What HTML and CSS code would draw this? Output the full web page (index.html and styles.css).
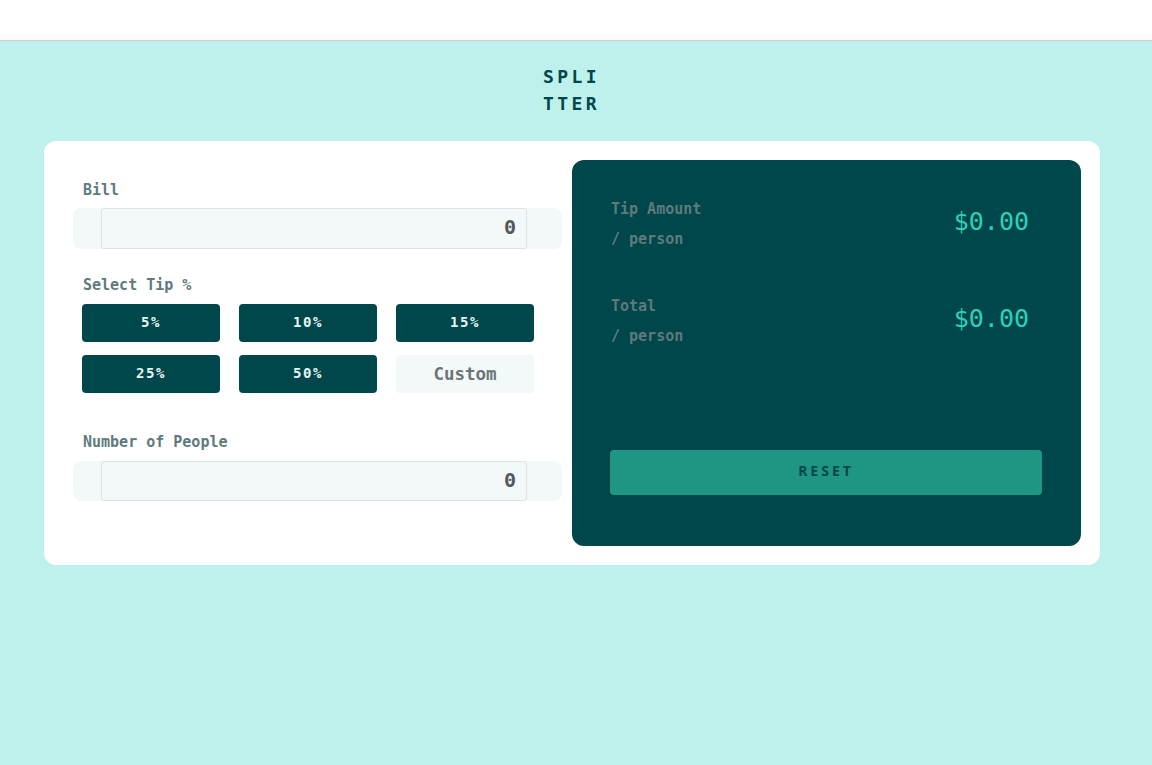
FILE: index.html
```html
<!DOCTYPE html>
<html lang="en">
<head>
<meta charset="utf-8">
<title>Splitter</title>
<link rel="stylesheet" href="styles.css">
</head>
<body>
<div class="topbar"></div>
<main class="page">
  <h1 class="logo">SPLITTER</h1>
  <section class="card">
    <div class="inputs">
      <label class="label label-bill">Bill</label>
      <div class="field">
        <div class="field-input">0</div>
      </div>
      <div class="label label-tip">Select Tip %</div>
      <div class="tips">
        <button class="tip">5%</button>
        <button class="tip">10%</button>
        <button class="tip">15%</button>
        <button class="tip">25%</button>
        <button class="tip">50%</button>
        <button class="tip tip-custom">Custom</button>
      </div>
      <label class="label label-people">Number of People</label>
      <div class="field field-people">
        <div class="field-input">0</div>
      </div>
    </div>
    <div class="results">
      <div class="result">
        <div class="result-text">
          <div>Tip Amount</div>
          <div>/ person</div>
        </div>
        <div class="result-value">$0.00</div>
      </div>
      <div class="result">
        <div class="result-text">
          <div>Total</div>
          <div>/ person</div>
        </div>
        <div class="result-value">$0.00</div>
      </div>
      <button class="reset">RESET</button>
    </div>
  </section>
</main>
</body>
</html>
```

FILE: styles.css
```css
* { box-sizing: border-box; }

html, body {
  margin: 0;
  padding: 0;
}

body {
  background: #bff1ec;
  font-family: "DejaVu Sans Mono", monospace;
  min-height: 765px;
}

.topbar {
  height: 41px;
  background: linear-gradient(#ffffff 0, #ffffff 34px, #fafafa 34px, #fafafa 40px);
  border-bottom: 1px solid #cfcfcf;
}

.page {
  padding-top: 22px;
}

.logo {
  margin: 0 auto;
  width: 62px;
  font-size: 18px;
  line-height: 27px;
  letter-spacing: 3.4px;
  font-weight: bold;
  color: #00474b;
  word-break: break-all;
  text-align: left;
  position: relative;
  left: -2px;
}

.card {
  margin: 24px 0 0 44px;
  width: 1056px;
  height: 424px;
  background: #ffffff;
  border-radius: 12px;
  padding: 19px 19px 19px 29px;
  display: flex;
  gap: 10px;
}

.inputs {
  width: 489px;
  display: flex;
  flex-direction: column;
}

.label {
  display: block;
  font-size: 15px;
  line-height: 18px;
  font-weight: bold;
  color: #5e7a7d;
  padding-left: 10px;
}

.label-bill { margin-top: 21px; margin-bottom: 9px; }
.label-tip { margin-top: 27px; margin-bottom: 10px; }
.label-people { margin-top: 40px; margin-bottom: 10px; }

.field {
  height: 41px;
  background: #f3f8f8;
  border-radius: 8px;
  padding: 0 35px 0 28px;
  display: flex;
}

.field-people {
  height: 40px;
}

.field-input {
  flex: 1;
  border: 1px solid #dce2e5;
  border-radius: 3px;
  background: #f3f9f9;
  text-align: right;
  font-size: 20px;
  font-weight: bold;
  line-height: 37px;
  color: #54585a;
  padding-right: 10px;
}

.tips {
  margin-left: 9px;
  width: 452px;
  display: grid;
  grid-template-columns: repeat(3, 138px);
  column-gap: 19px;
  row-gap: 13px;
}

.tip {
  height: 38px;
  border: none;
  border-radius: 4px;
  background: #00474b;
  color: #e8f6f5;
  font-family: "DejaVu Sans Mono", monospace;
  font-weight: bold;
  font-size: 14px;
  letter-spacing: 1.6px;
  padding: 0 0 2px;
}

.tip-custom {
  background: #f3f8f8;
  color: #6a7576;
  font-size: 17.5px;
  letter-spacing: 0;
  padding: 0;
}

.results {
  width: 509px;
  background: #00474b;
  border-radius: 12px;
  padding: 34px 39px 51px 38px;
  display: flex;
  flex-direction: column;
}

.result {
  display: flex;
  align-items: center;
  justify-content: space-between;
  padding-left: 1px;
  padding-right: 13px;
}

.result + .result {
  margin-top: 37px;
}

.result-text {
  font-size: 15px;
  line-height: 30px;
  font-weight: bold;
  color: #5e7a7d;
}

.result-value {
  font-size: 25px;
  color: #2fd0b8;
  margin-top: -6px;
}

.reset {
  margin-top: auto;
  height: 45px;
  border: none;
  border-radius: 4px;
  background: #1f9583;
  color: #00474b;
  font-family: "Open Sans", sans-serif;
  font-weight: bold;
  font-size: 14px;
  letter-spacing: 3px;
  padding: 0 0 4px;
}
```
